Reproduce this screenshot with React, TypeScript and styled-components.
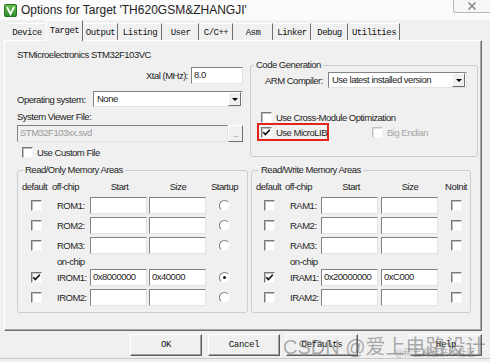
import React from 'react'
import styled, { createGlobalStyle } from 'styled-components'

const ui = `"Liberation Sans", Arial, sans-serif`
const mono = `"Liberation Mono", "DejaVu Sans Mono", monospace`

interface ImemRow {
  name: string
  def: boolean
  start: string
  size: string
  flag: boolean
}

const tabs = [
  { label: 'Device', w: 38 },
  { label: 'Target', w: 37 },
  { label: 'Output', w: 35 },
  { label: 'Listing', w: 44 },
  { label: 'User', w: 37 },
  { label: 'C/C++', w: 34 },
  { label: 'Asm', w: 40 },
  { label: 'Linker', w: 38 },
  { label: 'Debug', w: 37 },
  { label: 'Utilities', w: 52 },
]
const activeTab = 1

const romOff: ImemRow[] = [
  { name: 'ROM1:', def: false, start: '', size: '', flag: false },
  { name: 'ROM2:', def: false, start: '', size: '', flag: false },
  { name: 'ROM3:', def: false, start: '', size: '', flag: false },
]
const romOn: ImemRow[] = [
  { name: 'IROM1:', def: true, start: '0x8000000', size: '0x40000', flag: true },
  { name: 'IROM2:', def: false, start: '', size: '', flag: false },
]
const ramOff: ImemRow[] = [
  { name: 'RAM1:', def: false, start: '', size: '', flag: false },
  { name: 'RAM2:', def: false, start: '', size: '', flag: false },
  { name: 'RAM3:', def: false, start: '', size: '', flag: false },
]
const ramOn: ImemRow[] = [
  { name: 'IRAM1:', def: true, start: '0x20000000', size: '0xC000', flag: false },
  { name: 'IRAM2:', def: false, start: '', size: '', flag: false },
]

const Check = ({ on, off }: { on?: boolean; off?: boolean }) => (
  <CheckBox $disabled={off}>
    {on && (
      <svg width="9" height="9" viewBox="0 0 9 9">
        <path d="M1.3 4.3 L3.4 6.6 L7.8 1.8" fill="none" stroke="#111" strokeWidth="1.7" />
      </svg>
    )}
  </CheckBox>
)

const MemGroup = ({
  title,
  cols,
  last,
  off,
  on,
  radio,
  legendX,
  w,
}: {
  title: string
  cols: string
  last: string
  off: ImemRow[]
  on: ImemRow[]
  radio: boolean
  legendX: number
  w: number
}) => {
  const row = (r: ImemRow) => (
    <React.Fragment key={r.name}>
      <Cell $center>
        <Check on={r.def} />
      </Cell>
      <RowName>{r.name}</RowName>
      <Cell>
        <Field>{r.start}</Field>
      </Cell>
      <Cell>
        <Field>{r.size}</Field>
      </Cell>
      <Cell $center>{radio ? <Radio $on={r.flag} /> : <Check on={r.flag} />}</Cell>
    </React.Fragment>
  )
  return (
    <Group $w={w} $pad="1px 1px 5px 3px">
      <Legend $x={legendX}>{title}</Legend>
      <MemGrid $cols={cols}>
        <Head>default</Head>
        <Head>off-chip</Head>
        <Head $center>Start</Head>
        <Head $center>Size</Head>
        <Head $center>{last}</Head>
        {off.map(row)}
        <span />
        <RowName>on-chip</RowName>
        <span />
        <span />
        <span />
        {on.map(row)}
      </MemGrid>
    </Group>
  )
}

const App = (): React.ReactElement => {
  return (
    <>
      <GlobalStyle />
      <Dialog>
        <TitleBar>
          <svg width="13" height="13" viewBox="0 0 13 13">
            <defs>
              <linearGradient id="kg" x1="0" y1="0" x2="0" y2="1">
                <stop offset="0" stopColor="#6cc04a" />
                <stop offset="1" stopColor="#2e8a2e" />
              </linearGradient>
            </defs>
            <rect x="0.5" y="0.5" width="12" height="12" rx="1" fill="url(#kg)" stroke="#256f25" />
            <path d="M3 3 L6.5 10 L10 3" fill="none" stroke="#fff" strokeWidth="1.8" />
          </svg>
          <TitleText>Options for Target 'TH620GSM&amp;ZHANGJI'</TitleText>
          <CloseButton>
            <svg width="10" height="8" viewBox="0 0 10 8">
              <path d="M1.5 0.5 L8.5 7.5 M8.5 0.5 L1.5 7.5" stroke="#8a8a8a" strokeWidth="1.6" />
            </svg>
          </CloseButton>
        </TitleBar>

        <TabStrip>
          {tabs.map((t, i) => (
            <Tab key={t.label} $w={t.w} $active={i === activeTab} $noSep={i === activeTab - 1}>
              {t.label}
            </Tab>
          ))}
        </TabStrip>

        <Panel>
          <TopArea>
            <LeftCol>
              <DeviceName>STMicroelectronics STM32F103VC</DeviceName>
              <XtalRow>
                <span>Xtal (MHz):</span>
                <Field $w={52}>8.0</Field>
              </XtalRow>
              <OsRow>
                <span>Operating system:</span>
                <Select $w={150}>
                  <SelectText>None</SelectText>
                  <DropButton />
                </Select>
              </OsRow>
              <SvLabel>System Viewer File:</SvLabel>
              <SvRow>
                <Field $w={211} $disabled>
                  STM32F103xx.svd
                </Field>
                <DotsButton>...</DotsButton>
              </SvRow>
              <CheckRow $top={4} $left={5}>
                <Check />
                <span>Use Custom File</span>
              </CheckRow>
            </LeftCol>

            <Group $w={228} $pad="0 6px 15px 6px" $top={10}>
              <Legend $x={-3}>Code Generation</Legend>
              <ArmRow>
                <ArmLabel>ARM Compiler:</ArmLabel>
                <Select $w={139}>
                  <SelectText>Use latest installed version</SelectText>
                  <DropButton />
                </Select>
              </ArmRow>
              <CheckRow $top={23} $left={4}>
                <Check />
                <span>Use Cross-Module Optimization</span>
              </CheckRow>
              <MicroRow>
                <Highlight>
                  <Check on />
                  <span>Use MicroLIB</span>
                </Highlight>
                <CheckRow $left={43} $disabled>
                  <Check off />
                  <span>Big Endian</span>
                </CheckRow>
              </MicroRow>
            </Group>
          </TopArea>

          <MemoryArea>
            <MemGroup
              title="Read/Only Memory Areas"
              cols="30px 39px 59px 58px 35px"
              last="Startup"
              off={romOff}
              on={romOn}
              radio
              legendX={2}
              w={231}
            />
            <MemGroup
              title="Read/Write Memory Areas"
              cols="29px 37px 60px 58px 34px"
              last="NoInit"
              off={ramOff}
              on={ramOn}
              radio={false}
              legendX={4}
              w={220}
            />
          </MemoryArea>
        </Panel>

        <ButtonRow>
          <Button>OK</Button>
          <Button>Cancel</Button>
          <Button>Defaults</Button>
          <Button $push>Help</Button>
        </ButtonRow>

        <Watermark>
          CSDN @爱上电路设计
          <SmallMark>@稀土掘金技术社区</SmallMark>
        </Watermark>
      </Dialog>
    </>
  )
}

const GlobalStyle = createGlobalStyle`
  html, body {
    margin: 0;
    padding: 0;
    background: #f0f0f0;
  }
  body {
    width: 490px;
    height: 362px;
    overflow: hidden;
  }
`
const Dialog = styled.div`
  position: relative;
  width: 490px;
  height: 362px;
  display: flex;
  flex-direction: column;
  background: #f0f0f0;
  font-family: ${ui};
  font-size: 9.5px;
  letter-spacing: -0.5px;
  color: #1e1e1e;
  overflow: hidden;
`
const TitleBar = styled.div`
  flex: none;
  height: 20px;
  display: flex;
  align-items: center;
  padding-left: 4px;
  background: #fbfbfb;
  letter-spacing: 0;
`
const TitleText = styled.div`
  margin-left: 4px;
  font-family: 'Liberation Sans', Arial, sans-serif;
  font-size: 12px;
  color: #222;
`
const CloseButton = styled.div`
  align-self: flex-start;
  margin-left: auto;
  width: 36px;
  height: 12px;
  display: flex;
  align-items: center;
  justify-content: center;
  background: #f7f7f7;
  border: 1px solid #b8b8b8;
  border-top: none;
  border-right: none;
  border-radius: 0 0 0 3px;
`
const TabStrip = styled.div`
  flex: none;
  height: 20px;
  display: flex;
  align-items: flex-end;
  padding-left: 8px;
`
const Tab = styled.div<{ $w: number; $active?: boolean; $noSep?: boolean }>`
  position: relative;
  z-index: ${(p) => (p.$active ? 1 : 0)};
  width: ${(p) => p.$w}px;
  height: ${(p) => (p.$active ? 21 : 17)}px;
  margin-bottom: ${(p) => (p.$active ? -1 : 0)}px;
  box-sizing: border-box;
  display: flex;
  align-items: center;
  justify-content: center;
  padding-top: ${(p) => (p.$active ? 0 : 2)}px;
  background: #f0f0f0;
  border-top: 1px solid #fff;
  border-left: 1px solid ${(p) => (p.$active ? '#fff' : 'transparent')};
  border-right: 1px solid ${(p) => (p.$noSep ? 'transparent' : '#6f6f6f')};
  font-family: ${mono};
  font-size: 9px;
  letter-spacing: -0.5px;
  color: #111;
`
const Panel = styled.div`
  flex: none;
  height: 291px;
  margin: 0 8px 0 4px;
  box-sizing: border-box;
  padding: 8px 0 0 12px;
  border: 1px solid;
  border-color: #fff #6f6f6f #6f6f6f #fff;
  box-shadow: inset -1px -1px 0 #a8a8a8;
`
const TopArea = styled.div`
  display: flex;
  align-items: flex-start;
  gap: 7px;
`
const LeftCol = styled.div`
  width: 226px;
  display: flex;
  flex-direction: column;
  white-space: nowrap;
`
const DeviceName = styled.div`
  height: 12px;
  line-height: 12px;
`
const XtalRow = styled.div`
  margin-top: 6px;
  height: 17px;
  display: flex;
  align-items: center;
  justify-content: flex-end;
  gap: 3px;
`
const OsRow = styled.div`
  margin-top: 7px;
  height: 16px;
  display: flex;
  align-items: center;
  justify-content: space-between;
`
const SvLabel = styled.div`
  margin-top: 5px;
  height: 10px;
  line-height: 10px;
`
const SvRow = styled.div`
  margin-top: 3px;
  height: 17px;
  display: flex;
`
const Field = styled.div<{ $w?: number; $disabled?: boolean }>`
  width: ${(p) => p.$w ?? 57}px;
  height: 17px;
  box-sizing: border-box;
  padding: 1px 2px 0;
  line-height: 12px;
  white-space: nowrap;
  overflow: hidden;
  background: ${(p) => (p.$disabled ? '#f0f0f0' : '#fff')};
  color: ${(p) => (p.$disabled ? '#9a9a9a' : '#1e1e1e')};
  border: 1px solid;
  border-color: #828282 #e3e3e3 #e3e3e3 #828282;
`
const DotsButton = styled.div`
  width: 15px;
  height: 17px;
  box-sizing: border-box;
  display: flex;
  align-items: flex-end;
  justify-content: center;
  padding-bottom: 2px;
  line-height: 8px;
  font-size: 8px;
  color: #777;
  background: #f0f0f0;
  border: 1px solid;
  border-color: #fff #6f6f6f #6f6f6f #fff;
`
const Select = styled.div<{ $w: number }>`
  width: ${(p) => p.$w}px;
  height: 16px;
  box-sizing: border-box;
  display: flex;
  background: #fff;
  border: 1px solid;
  border-color: #828282 #e3e3e3 #e3e3e3 #828282;
`
const SelectText = styled.div`
  flex: 1;
  padding-left: 3px;
  line-height: 14px;
  white-space: nowrap;
`
const DropButton = styled.div`
  width: 13px;
  margin: 0 1px 0 0;
  box-sizing: border-box;
  display: flex;
  align-items: center;
  justify-content: center;
  background: #f0f0f0;
  border: 1px solid;
  border-color: #fff #6f6f6f #6f6f6f #fff;
  &::after {
    content: '';
    border-left: 3px solid transparent;
    border-right: 3px solid transparent;
    border-top: 3px solid #000;
  }
`
const CheckRow = styled.div<{ $top?: number; $left?: number; $disabled?: boolean }>`
  margin-top: ${(p) => p.$top ?? 0}px;
  margin-left: ${(p) => p.$left ?? 0}px;
  height: 12px;
  display: flex;
  align-items: center;
  gap: 4px;
  white-space: nowrap;
  color: ${(p) => (p.$disabled ? '#a6a6a6' : 'inherit')};
`
const CheckBox = styled.span<{ $disabled?: boolean }>`
  flex: none;
  width: 11px;
  height: 11px;
  box-sizing: border-box;
  display: inline-flex;
  align-items: center;
  justify-content: center;
  background: #fff;
  border: 1px solid;
  border-color: ${(p) =>
    p.$disabled ? '#c2c2c2 #f4f4f4 #f4f4f4 #c2c2c2' : '#7a7a7a #f6f6f6 #f6f6f6 #7a7a7a'};
  box-shadow: inset 1px 1px 0 ${(p) => (p.$disabled ? '#e0e0e0' : '#bdbdbd')};
`
const Radio = styled.span<{ $on?: boolean }>`
  width: 11px;
  height: 11px;
  box-sizing: border-box;
  display: inline-flex;
  align-items: center;
  justify-content: center;
  border-radius: 50%;
  background: #fff;
  border: 1px solid;
  border-color: #808080 #f4f4f4 #f4f4f4 #808080;
  &::after {
    content: '';
    width: 3px;
    height: 3px;
    border-radius: 50%;
    background: ${(p) => (p.$on ? '#111' : 'transparent')};
  }
`
const Group = styled.fieldset<{ $w: number; $pad: string; $top?: number }>`
  margin: ${(p) => p.$top ?? 0}px 0 0;
  width: ${(p) => p.$w}px;
  min-width: 0;
  box-sizing: border-box;
  padding: ${(p) => p.$pad};
  border: 1px solid #c9ccd0;
  border-radius: 3px;
`
const Legend = styled.legend<{ $x: number }>`
  margin-left: ${(p) => p.$x}px;
  padding: 0 2px;
  line-height: 12px;
  font-size: 9.5px;
  white-space: nowrap;
`
const ArmRow = styled.div`
  margin-top: 1px;
  height: 16px;
  display: flex;
  align-items: center;
  padding-left: 8px;
  white-space: nowrap;
`
const ArmLabel = styled.div`
  width: 63px;
`
const MicroRow = styled.div`
  height: 18px;
  display: flex;
  align-items: center;
`
const Highlight = styled.div`
  width: 72px;
  height: 18px;
  box-sizing: border-box;
  display: flex;
  align-items: center;
  gap: 4px;
  padding-left: 2px;
  border: 2px solid #e1251b;
  white-space: nowrap;
`
const MemoryArea = styled.div`
  margin-top: 6px;
  display: flex;
  gap: 3px;
`
const MemGrid = styled.div<{ $cols: string }>`
  display: grid;
  grid-template-columns: ${(p) => p.$cols};
  grid-template-rows: 18px 20px 20px 20px 12px 20px 20px;
  align-items: center;
`
const Head = styled.div<{ $center?: boolean }>`
  padding-left: ${(p) => (p.$center ? 0 : 1)}px;
  text-align: ${(p) => (p.$center ? 'center' : 'left')};
  white-space: nowrap;
`
const Cell = styled.div<{ $center?: boolean }>`
  display: flex;
  align-items: center;
  justify-content: ${(p) => (p.$center ? 'center' : 'flex-start')};
`
const RowName = styled.div`
  padding-left: 6px;
  white-space: nowrap;
`
const ButtonRow = styled.div`
  flex: none;
  height: 28px;
  box-sizing: border-box;
  display: flex;
  align-items: flex-start;
  gap: 6px;
  padding: 3px 8px 0 130px;
  border-bottom: 1px solid #c8c8c8;
`
const Button = styled.div<{ $push?: boolean }>`
  width: 72px;
  height: 22px;
  box-sizing: border-box;
  margin-left: ${(p) => (p.$push ? 'auto' : '0')};
  display: flex;
  align-items: center;
  justify-content: center;
  background: #f0f0f0;
  border: 1px solid;
  border-color: #fff #5f5f5f #5f5f5f #fff;
  box-shadow: inset -1px -1px 0 #a0a0a0;
  font-family: ${mono};
  font-size: 9px;
  letter-spacing: -0.3px;
  color: #111;
`
const Watermark = styled.div`
  position: absolute;
  left: 283px;
  top: 335px;
  font-family: 'Liberation Sans', 'Noto Sans CJK SC', sans-serif;
  font-size: 20px;
  line-height: 24px;
  letter-spacing: 0;
  color: rgba(95, 95, 95, 0.5);
  white-space: nowrap;
  pointer-events: none;
`
const SmallMark = styled.span`
  position: absolute;
  left: 112px;
  top: 13px;
  font-family: 'Noto Sans CJK SC', sans-serif;
  font-size: 9px;
  line-height: 10px;
  color: rgba(120, 120, 120, 0.55);
`
export default App
